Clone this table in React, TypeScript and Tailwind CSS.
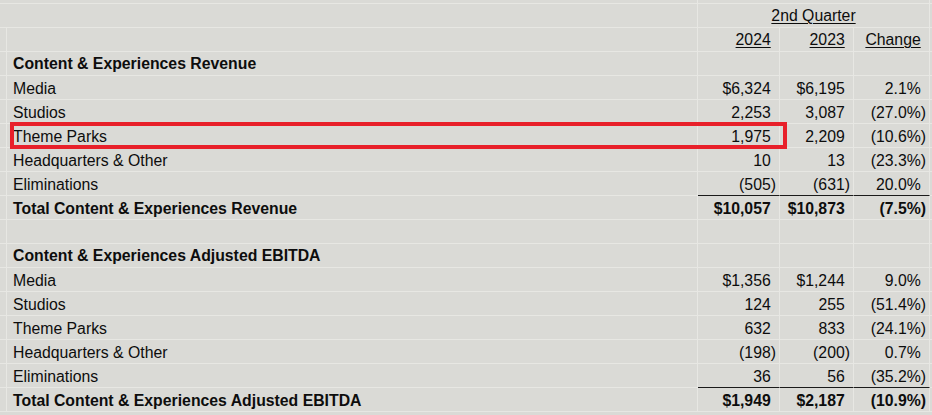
type Vals = [string, string, string];

type Row = {
  kind: "title" | "item" | "total" | "blank";
  label?: string;
  vals?: Vals;
  underline?: boolean;
};

const rows: Row[] = [
  { kind: "title", label: "Content & Experiences Revenue" },
  { kind: "item", label: "Media", vals: ["$6,324", "$6,195", "2.1%"] },
  { kind: "item", label: "Studios", vals: ["2,253", "3,087", "(27.0%)"] },
  { kind: "item", label: "Theme Parks", vals: ["1,975", "2,209", "(10.6%)"] },
  { kind: "item", label: "Headquarters & Other", vals: ["10", "13", "(23.3%)"] },
  { kind: "item", label: "Eliminations", vals: ["(505)", "(631)", "20.0%"], underline: true },
  { kind: "total", label: "Total Content & Experiences Revenue", vals: ["$10,057", "$10,873", "(7.5%)"] },
  { kind: "blank" },
  { kind: "title", label: "Content & Experiences Adjusted EBITDA" },
  { kind: "item", label: "Media", vals: ["$1,356", "$1,244", "9.0%"] },
  { kind: "item", label: "Studios", vals: ["124", "255", "(51.4%)"] },
  { kind: "item", label: "Theme Parks", vals: ["632", "833", "(24.1%)"] },
  { kind: "item", label: "Headquarters & Other", vals: ["(198)", "(200)", "0.7%"] },
  { kind: "item", label: "Eliminations", vals: ["36", "56", "(35.2%)"], underline: true },
  { kind: "total", label: "Total Content & Experiences Adjusted EBITDA", vals: ["$1,949", "$2,187", "(10.9%)"] },
];

const grid = "border-[#e7e7e3]";
const widths = ["w-[82px]", "w-[74px]", "w-[76px]"];

// keeps positive numbers lined up with the ones in parentheses
function Num({ v }: { v: string }) {
  if (v.endsWith(")")) return <span>{v}</span>;
  return (
    <span>
      {v}
      <span className="invisible">)</span>
    </span>
  );
}

function DataRow({ row }: { row: Row }) {
  const bold = row.kind === "title" || row.kind === "total" ? "font-bold" : "";
  const pad = row.kind === "title" ? "pt-px" : "pt-[2px]";
  const numLine = row.underline ? "border-b-[#1a1a1a]" : "";
  return (
    <div className="flex h-[24px]">
      <div className={`w-[7px] shrink-0 border-r border-b ${grid}`} />
      <div className={`flex w-[691px] shrink-0 items-center border-r border-b pl-[6px] ${pad} ${grid} ${bold}`}>
        {row.label}
      </div>
      {widths.map((w, i) => (
        <div
          key={i}
          className={`flex ${w} shrink-0 items-center justify-end border-r border-b pr-[3px] ${pad} ${grid} ${numLine} ${bold}`}
        >
          {row.vals && <Num v={row.vals[i]} />}
        </div>
      ))}
      <div className={`flex-1 border-b ${grid}`} />
    </div>
  );
}

export default function App() {
  return (
    <div className="relative h-[415px] w-[932px] overflow-hidden bg-[#dadad6] font-['Liberation_Sans',Arial,sans-serif] text-[15.8px] text-[#0d0d0d]">
      <div className={`flex h-[4px] border-b ${grid}`}>
        <div className={`w-[698px] shrink-0 border-r ${grid}`} />
        <div className={`w-[232px] shrink-0 border-r ${grid}`} />
      </div>

      {/* header */}
      <div className={`flex h-[24px] border-b ${grid}`}>
        <div className={`w-[698px] shrink-0 border-r ${grid}`} />
        <div className={`flex w-[232px] shrink-0 items-center justify-center border-r ${grid}`}>
          <span className="underline decoration-1 underline-offset-2">2nd Quarter</span>
        </div>
      </div>
      <div className={`flex h-[24px] border-b ${grid}`}>
        <div className={`w-[7px] shrink-0 border-r ${grid}`} />
        <div className={`w-[691px] shrink-0 border-r ${grid}`} />
        {[
          ["2024", "w-[82px]"],
          ["2023", "w-[74px]"],
          ["Change", "w-[76px]"],
        ].map(([t, w]) => (
          <div key={t} className={`flex ${w} shrink-0 items-center justify-end border-r pr-[3px] ${grid}`}>
            <span className="underline decoration-1 underline-offset-2">{t}</span>
            <span className="invisible">)</span>
          </div>
        ))}
      </div>

      {rows.map((r, i) => (
        <DataRow key={i} row={r} />
      ))}

      {/* highlight around the Theme Parks revenue line */}
      <div className="absolute left-[10px] top-[122px] h-[27px] w-[777px] border-4 border-[#e8202a]" />
    </div>
  );
}
